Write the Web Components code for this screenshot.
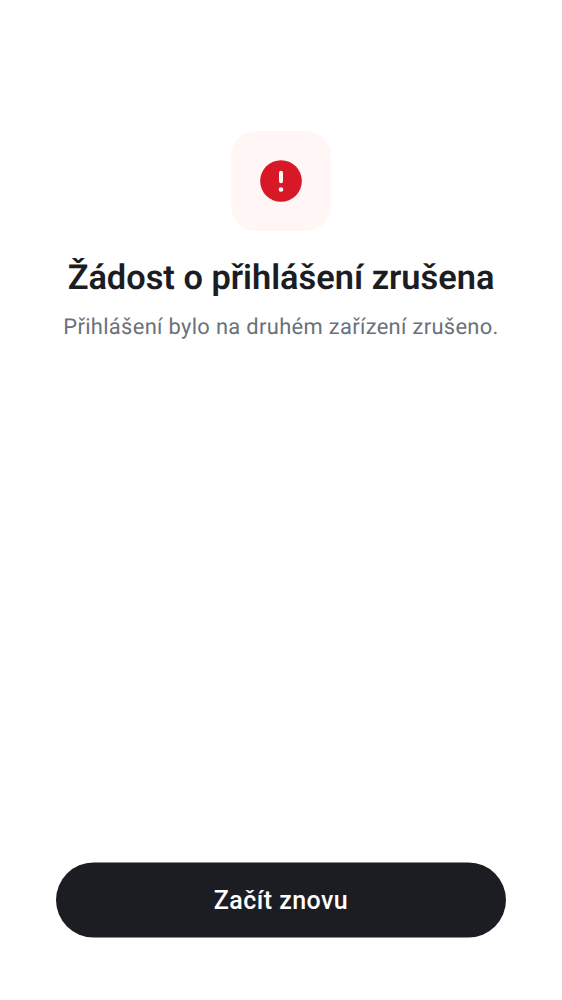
<!DOCTYPE html>
<html lang="cs">
<head>
<meta charset="utf-8">
<title>Žádost o přihlášení zrušena</title>
<style>
html,body{margin:0;height:100%;background:#fff;font-family:Roboto,"Noto Sans",sans-serif;text-rendering:geometricPrecision}
</style>
</head>
<body>
<status-screen>
  <alert-icon slot="icon"></alert-icon>
  <span slot="title">Žádost o přihlášení zrušena</span>
  <span slot="text">Přihlášení bylo na druhém zařízení zrušeno.</span>
  <pill-button slot="action">Začít znovu</pill-button>
</status-screen>
<script>
class AlertIcon extends HTMLElement {
  constructor() {
    super();
    this.attachShadow({mode: 'open'}).innerHTML = `
      <style>
        :host{display:flex;align-items:center;justify-content:center;width:100px;height:100px;border-radius:25px;background:#fff6f5}
        svg{display:block}
      </style>
      <svg width="50" height="50" viewBox="0 0 24 24" aria-hidden="true">
        <circle cx="12" cy="12" r="10" fill="#d71927"/>
        <path d="M12 7.1a.95.95 0 0 1 .95.95v4.1a.95.95 0 0 1-1.9 0v-4.1A.95.95 0 0 1 12 7.1z" fill="#fff"/>
        <circle cx="12" cy="16.1" r="1.1" fill="#fff"/>
      </svg>`;
  }
}
class PillButton extends HTMLElement {
  constructor() {
    super();
    this.attachShadow({mode: 'open'}).innerHTML = `
      <style>
        :host{display:block}
        button{display:flex;align-items:center;justify-content:center;width:100%;height:75px;border:0;padding:0;border-radius:38px;background:#1c1d22;color:#fff;font:500 25px/38px Roboto,"Noto Sans",sans-serif;letter-spacing:.44px;transform:translateY(-.5px)}
      </style>
      <button type="button"><span><slot></slot></span></button>`;
  }
}
class StatusScreen extends HTMLElement {
  constructor() {
    super();
    this.attachShadow({mode: 'open'}).innerHTML = `
      <style>
        :host{display:flex;flex-direction:column;align-items:center;box-sizing:border-box;height:1000px;padding:131px 56px 62px}
        h1{margin:24px 0 0;font-size:34.375px;line-height:46px;font-weight:600;color:#1c1d22;white-space:nowrap}
        p{margin:11px 0 0;font-size:21.9px;line-height:32px;letter-spacing:.325px;color:#69717b;white-space:nowrap}
        footer{margin-top:auto;align-self:stretch}
      </style>
      <slot name="icon"></slot>
      <h1><slot name="title"></slot></h1>
      <p><slot name="text"></slot></p>
      <footer><slot name="action"></slot></footer>`;
  }
}
customElements.define('alert-icon', AlertIcon);
customElements.define('pill-button', PillButton);
customElements.define('status-screen', StatusScreen);
</script>
</body>
</html>
